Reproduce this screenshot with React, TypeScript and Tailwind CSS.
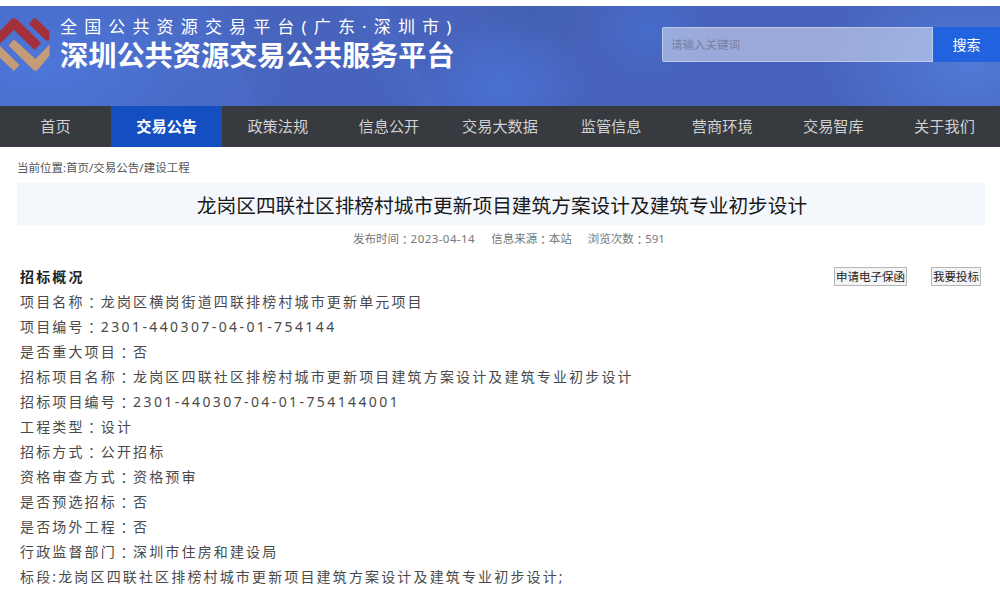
const navItems = [
  "首页",
  "交易公告",
  "政策法规",
  "信息公开",
  "交易大数据",
  "监管信息",
  "营商环境",
  "交易智库",
  "关于我们",
];

const details = [
  { label: "项目名称", value: "龙岗区横岗街道四联排榜村城市更新单元项目" },
  { label: "项目编号", value: "2301-440307-04-01-754144" },
  { label: "是否重大项目", value: "否" },
  {
    label: "招标项目名称",
    value: "龙岗区四联社区排榜村城市更新项目建筑方案设计及建筑专业初步设计",
  },
  { label: "招标项目编号", value: "2301-440307-04-01-754144001" },
  { label: "工程类型", value: "设计" },
  { label: "招标方式", value: "公开招标" },
  { label: "资格审查方式", value: "资格预审" },
  { label: "是否预选招标", value: "否" },
  { label: "是否场外工程", value: "否" },
  { label: "行政监督部门", value: "深圳市住房和建设局" },
];

// Full-width colon, centred in its cell
const Colon = () => (
  <span
    className="inline-block translate-y-[1px] font-['Noto_Sans_CJK_TC',sans-serif] leading-none"
    lang="zh-TW"
  >
    ：
  </span>
);

const Logo = () => (
  <svg className="mt-[10px] h-[56px] w-[52px] shrink-0" viewBox="0 15 52 56">
    <path d="M0 30 11 18.5Q14 15.5 17 18.5L41 42 34.5 49 14 29 0 42.5Z" fill="#a3303b" />
    <path d="M29 23 33 18Q35 16.500 37 18.500L49.500 30.500V39.500H46Z" fill="#a3303b" />
    <path d="M0 45 19.500 64 14 70 0 57Z" fill="#c69c78" />
    <path d="M8.500 44.500 14 38.500 35.500 58 49.500 43.500V54.500L38 68.500Q35.500 71 33 68.500Z" fill="#c69c78" />
  </svg>
);

const Header = () => (
  <header className="flex h-[99.5px] items-start bg-[#4763bb] bg-[linear-gradient(62deg,transparent_18%,#4d73d040_24%,transparent_25%,transparent_36%,#4d73d050_41%,transparent_42%),radial-gradient(260px_130px_at_40px_60px,#4d77da_0%,transparent_100%),radial-gradient(90px_70px_at_500px_80px,#4a70d2_0%,transparent_100%),radial-gradient(60px_50px_at_650px_25px,#466bc9_0%,transparent_100%),radial-gradient(150px_100px_at_970px_60px,#517ad6_0%,transparent_100%),radial-gradient(70px_60px_at_530px_10px,#4261b2_0%,transparent_100%)]">
    <Logo />
    <div className="ml-2 flex flex-col pt-[9px] text-white">
      <span className="h-6 whitespace-nowrap text-[17px] leading-6 tracking-[7.15px]">
        全国公共资源交易平台(广东·深圳市)
      </span>
      <span className="h-8 whitespace-nowrap text-[28.2px] font-bold leading-8">
        深圳公共资源交易公共服务平台
      </span>
    </div>
    <div className="ml-auto mt-[21px] flex h-[35px]">
      <input
        className="w-[271px] rounded-l-xs border border-white/35 bg-white/45 px-[8px] text-[11.5px] outline-none placeholder:text-[#7880a0]"
        placeholder="请输入关键词"
      />
      <button className="w-[67px] bg-[#2163df] text-[14px] text-white">搜索</button>
    </div>
  </header>
);

const Nav = () => (
  <nav className="grid h-[41.5px] grid-cols-9 bg-[#373a3f]">
    {navItems.map((item) => (
      <a
        key={item}
        className={
          item === "交易公告"
            ? "flex items-center justify-center bg-[#134fc0] text-[15.2px] font-bold text-white"
            : "flex items-center justify-center text-[15.2px] text-[#d0d1d3]"
        }
      >
        {item}
      </a>
    ))}
  </nav>
);

export default function App() {
  return (
    <div className="h-[594px] w-[1000px] overflow-hidden bg-white pt-[6px] font-['Noto_Sans','Noto_Sans_CJK_SC',sans-serif]">
      <Header />
      <Nav />
      <main className="pl-[17px] pr-[15px]">
        <div className="flex h-9 items-center pt-[5px] text-[11.5px] text-[#555]">
          当前位置:首页/交易公告/建设工程
        </div>
        <h1 className="flex h-[42px] items-center justify-center bg-[#f4f7fb] pl-[2px] pt-[4px] text-[19.7px] text-[#1a1a1a]">
          龙岗区四联社区排榜村城市更新项目建筑方案设计及建筑专业初步设计
        </h1>
        <div className="flex h-[27px] items-center justify-center gap-4 pl-[16px] text-[11.5px] text-[#777]">
          <span>
            发布时间<Colon />
            <span className="tracking-[0.45px]">2023-04-14</span>
          </span>
          <span>信息来源<Colon />本站</span>
          <span>浏览次数<Colon />591</span>
        </div>

        <section className="mt-[11.5px] pl-[3px] text-[14px] tracking-[2.15px] text-[#4a4a4a]">
          <div className="flex h-[25px] items-center justify-between pr-[4px]">
            <h2 className="font-bold text-[#222]">招标概况</h2>
            <div className="flex gap-6 text-[11.5px] tracking-normal text-[#222]">
              <button className="h-[19px] w-[73px] whitespace-nowrap border border-[#b5b5b5] bg-[#f4f4f4] leading-[17px]">
                申请电子保函
              </button>
              <button className="h-[19px] w-[50px] whitespace-nowrap border border-[#b5b5b5] bg-[#f4f4f4] leading-[17px]">
                我要投标
              </button>
            </div>
          </div>
          {details.map(({ label, value }) => (
            <p key={label} className="h-[25px] whitespace-nowrap leading-[25px]">
              {label}
              <Colon />
              <span className={/^\d/.test(value) ? "tracking-[2.4px]" : ""}>{value}</span>
            </p>
          ))}
          <p className="h-[25px] whitespace-nowrap leading-[25px]">
            标段:龙岗区四联社区排榜村城市更新项目建筑方案设计及建筑专业初步设计;
          </p>
        </section>
      </main>
    </div>
  );
}
